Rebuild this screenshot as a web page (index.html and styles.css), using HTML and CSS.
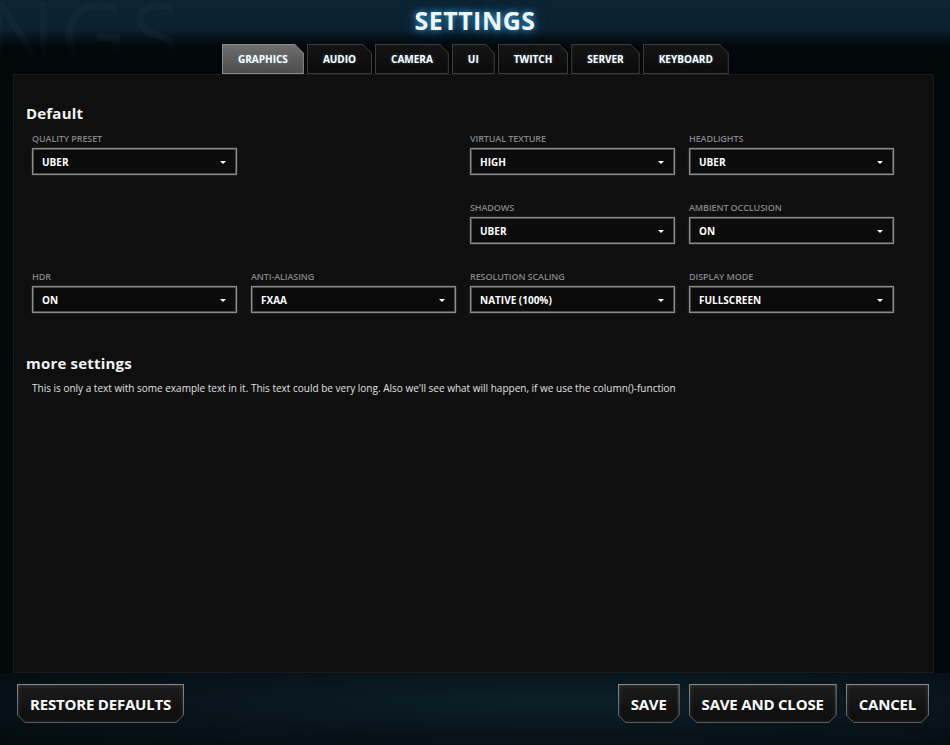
FILE: index.html
```html
<!DOCTYPE html>
<html>
<head>
<meta charset="utf-8">
<link rel="stylesheet" href="styles.css">
</head>
<body>
<div class="page">
  <div class="ghost">SETTINGS</div>
  <header class="header">
    <h1 class="title">SETTINGS</h1>
  </header>
  <nav class="tabs">
    <div class="tab active"><span class="tab-in">GRAPHICS</span></div>
    <div class="tab"><span class="tab-in">AUDIO</span></div>
    <div class="tab"><span class="tab-in">CAMERA</span></div>
    <div class="tab"><span class="tab-in">UI</span></div>
    <div class="tab"><span class="tab-in">TWITCH</span></div>
    <div class="tab"><span class="tab-in">SERVER</span></div>
    <div class="tab"><span class="tab-in">KEYBOARD</span></div>
  </nav>
  <main class="panel">
    <h2 class="section-title">Default</h2>
    <div class="grid">
      <div class="field c1 r1"><div class="label">QUALITY PRESET</div><div class="select"><span>UBER</span><i class="arrow"></i></div></div>
      <div class="field c3 r1"><div class="label">VIRTUAL TEXTURE</div><div class="select"><span>HIGH</span><i class="arrow"></i></div></div>
      <div class="field c4 r1"><div class="label">HEADLIGHTS</div><div class="select"><span>UBER</span><i class="arrow"></i></div></div>
      <div class="field c3 r2"><div class="label">SHADOWS</div><div class="select"><span>UBER</span><i class="arrow"></i></div></div>
      <div class="field c4 r2"><div class="label">AMBIENT OCCLUSION</div><div class="select"><span>ON</span><i class="arrow"></i></div></div>
      <div class="field c1 r3"><div class="label">HDR</div><div class="select"><span>ON</span><i class="arrow"></i></div></div>
      <div class="field c2 r3"><div class="label">ANTI-ALIASING</div><div class="select"><span>FXAA</span><i class="arrow"></i></div></div>
      <div class="field c3 r3"><div class="label">RESOLUTION SCALING</div><div class="select"><span>NATIVE (100%)</span><i class="arrow"></i></div></div>
      <div class="field c4 r3"><div class="label">DISPLAY MODE</div><div class="select"><span>FULLSCREEN</span><i class="arrow"></i></div></div>
    </div>
    <h2 class="section-title more">more settings</h2>
    <p class="text">This is only a text with some example text in it. This text could be very long. Also we'll see what will happen, if we use the column()-function</p>
  </main>
  <footer class="footer">
    <div class="btn"><span class="btn-in">RESTORE DEFAULTS</span></div>
    <div class="right">
      <div class="btn"><span class="btn-in">SAVE</span></div>
      <div class="btn"><span class="btn-in">SAVE AND CLOSE</span></div>
      <div class="btn"><span class="btn-in">CANCEL</span></div>
    </div>
  </footer>
</div>
</body>
</html>
```
FILE: styles.css
```css
* { box-sizing: border-box; }
html, body { margin: 0; padding: 0; }
body {
  width: 950px;
  height: 745px;
  overflow: hidden;
  font-family: "Open Sans", "DejaVu Sans", sans-serif;
  color: #fff;
  background: #030a0e;
}
.page {
  position: relative;
  width: 950px;
  height: 745px;
  display: flex;
  flex-direction: column;
  background:
    linear-gradient(180deg, #0c2331 0px, #0b2130 30px, #061219 38px, #02070a 48px, #02070a 100%);
  overflow: hidden;
}
.ghost {
  position: absolute;
  left: -262px;
  top: -30px;
  font-size: 92px;
  font-weight: 400;
  color: rgba(160, 200, 220, 0.035);
  letter-spacing: 4px;
  pointer-events: none;
  -webkit-mask-image: linear-gradient(180deg, #000 55%, transparent 75%);
  mask-image: linear-gradient(180deg, #000 55%, transparent 75%);
}
.header {
  position: relative;
  height: 44px;
  display: flex;
  justify-content: center;
  align-items: center;
}
.title {
  margin: 0;
  font-size: 25px;
  font-weight: 700;
  letter-spacing: 0.5px;
  color: #eef6fa;
  text-shadow: 0 0 6px rgba(60, 160, 220, 0.9), 0 0 14px rgba(40, 130, 200, 0.6);
  transform: translateY(-2px);
}
.tabs {
  position: relative;
  display: flex;
  gap: 3px;
  height: 30px;
  padding-left: 222px;
}
.tab {
  height: 30px;
  padding: 1px;
  background: #3c3c3c;
  clip-path: polygon(0 0, calc(100% - 9px) 0, 100% 9px, 100% 100%, 0 100%);
}
.tab-in {
  display: flex;
  align-items: center;
  height: 100%;
  padding: 0 15px 0 15px;
  font-size: 10px;
  font-weight: 700;
  color: #fff;
  background: linear-gradient(180deg, #141414, #0b0b0b);
  clip-path: polygon(0 0, calc(100% - 8px) 0, 100% 8px, 100% 100%, 0 100%);
  text-shadow: 0 0 3px rgba(120, 180, 220, 0.5);
}
.tab.active { background: #8c8c8c; }
.tab.active .tab-in {
  background: linear-gradient(180deg, #6e6e6e, #4d4d4d);
}
.panel {
  height: 599px;
  margin: 0 16px 0 13px;
  padding: 28px 12px 0 12px;
  background: #0f0f0f;
  border: 1px solid #1b1b1b;
}
.section-title {
  margin: 0;
  height: 20px;
  line-height: 20px;
  font-size: 15px;
  font-weight: 700;
  letter-spacing: 0.2px;
  color: #f2f2f2;
}
.grid {
  margin: 10px 0 0 6px;
  display: grid;
  grid-template-columns: repeat(4, 205px);
  grid-template-rows: repeat(3, 42px);
  column-gap: 14px;
  row-gap: 27px;
}
.c1 { grid-column: 1; }
.c2 { grid-column: 2; }
.c3 { grid-column: 3; }
.c4 { grid-column: 4; }
.r1 { grid-row: 1; }
.r2 { grid-row: 2; }
.r3 { grid-row: 3; }
.label {
  height: 12px;
  line-height: 12px;
  margin-bottom: 3px;
  font-size: 9px;
  font-weight: 600;
  color: #858585;
  letter-spacing: -0.1px;
}
.select {
  height: 27px;
  display: flex;
  align-items: center;
  justify-content: space-between;
  padding: 0 10px 0 9px;
  background: #0b0b0b;
  border: 1px solid #8a8a8a;
  box-shadow: inset 0 0 0 1px #4a4a4a, 0 0 2px rgba(255, 255, 255, 0.25);
  font-size: 10px;
  font-weight: 700;
  color: #fff;
}
.arrow {
  width: 0;
  height: 0;
  border-left: 3px solid transparent;
  border-right: 3px solid transparent;
  border-top: 3px solid #fff;
  margin-top: 1px;
}
.section-title.more { margin-top: 40px; }
.text {
  margin: 8px 0 0 6px;
  height: 14px;
  line-height: 14px;
  font-size: 10px;
  color: #e0e0e0;
}
.footer {
  display: flex;
  justify-content: space-between;
  align-items: flex-start;
  flex: 1;
  padding: 11px 21px 0 17px;
  background: radial-gradient(ellipse at 60% 40%, #0c1f28 0%, #071218 60%, #040b0f 100%);
}
.right {
  display: flex;
  gap: 9px;
}
.btn {
  height: 39px;
  padding: 1px;
  background: linear-gradient(180deg, #8a8a8a, #5a5a5a);
  clip-path: polygon(0 0, 100% 0, 100% calc(100% - 8px), calc(100% - 8px) 100%, 8px 100%, 0 calc(100% - 8px));
}
.btn-in {
  display: flex;
  align-items: center;
  height: 100%;
  padding: 0 12px;
  background: linear-gradient(180deg, #1c1c1c, #0c0c0c);
  clip-path: polygon(0 0, 100% 0, 100% calc(100% - 7px), calc(100% - 7px) 100%, 7px 100%, 0 calc(100% - 7px));
  font-size: 15px;
  font-weight: 700;
  letter-spacing: -0.2px;
  color: #fafafa;
  box-shadow: inset 0 0 4px rgba(255, 255, 255, 0.15);
}
```
